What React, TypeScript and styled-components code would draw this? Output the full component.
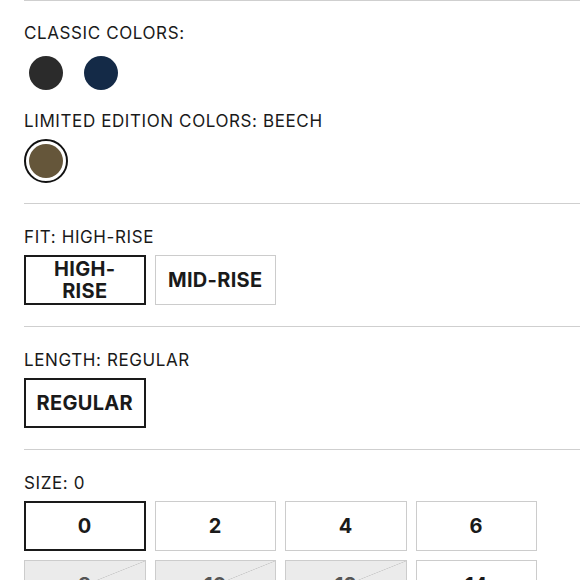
import React, { useState } from "react";
import styled, { createGlobalStyle, css } from "styled-components";

const GlobalStyle = createGlobalStyle`
    html, body {
        margin: 0;
        padding: 0;
        background: #fff;
    }
    body {
        font-family: Inter, "Helvetica Neue", Arial, sans-serif;
        color: #1a1a1a;
        overflow: hidden;
    }
`;

const classicColors = [
    { name: "BLACK", color: "#2b2b2b" },
    { name: "NAVY", color: "#142a47" },
];

const limitedColors = [{ name: "BEECH", color: "#65563a" }];

const fits = ["HIGH-RISE", "MID-RISE"];
const lengths = ["REGULAR"];
const sizes = [
    { label: "0", soldOut: false },
    { label: "2", soldOut: false },
    { label: "4", soldOut: false },
    { label: "6", soldOut: false },
    { label: "8", soldOut: true },
    { label: "10", soldOut: true },
    { label: "12", soldOut: true },
    { label: "14", soldOut: false },
];

/**
 * 商品选项面板
 */
const App = () => {
    const [color, setColor] = useState("BEECH");
    const [fit, setFit] = useState("HIGH-RISE");
    const [length, setLength] = useState("REGULAR");
    const [size, setSize] = useState("0");

    return (
        <Page>
            <GlobalStyle />
            <Section $first>
                <Label>CLASSIC COLORS:</Label>
                <SwatchRow>
                    {classicColors.map((c) => (
                        <Swatch key={c.name} $active={color === c.name} onClick={() => setColor(c.name)}>
                            <Dot $color={c.color} />
                        </Swatch>
                    ))}
                </SwatchRow>
                <Label $spaced>LIMITED EDITION COLORS: {color}</Label>
                <SwatchRow>
                    {limitedColors.map((c) => (
                        <Swatch key={c.name} $active={color === c.name} onClick={() => setColor(c.name)}>
                            <Dot $color={c.color} />
                        </Swatch>
                    ))}
                </SwatchRow>
            </Section>

            <Section>
                <Label>FIT: {fit}</Label>
                <OptionGrid>
                    {fits.map((f) => (
                        <Option key={f} $active={fit === f} onClick={() => setFit(f)}>
                            {f}
                        </Option>
                    ))}
                </OptionGrid>
            </Section>

            <Section>
                <Label>LENGTH: {length}</Label>
                <OptionGrid>
                    {lengths.map((l) => (
                        <Option key={l} $active={length === l} onClick={() => setLength(l)}>
                            {l}
                        </Option>
                    ))}
                </OptionGrid>
            </Section>

            <Section>
                <Label>SIZE: {size}</Label>
                <OptionGrid>
                    {sizes.map((s) => (
                        <Option
                            key={s.label}
                            $active={size === s.label}
                            $soldOut={s.soldOut}
                            onClick={() => !s.soldOut && setSize(s.label)}
                        >
                            {s.label}
                        </Option>
                    ))}
                </OptionGrid>
            </Section>
        </Page>
    );
};

const Page = styled.div`
    padding-left: 24px;
    width: 600px;
`;

const Section = styled.section<{ $first?: boolean }>`
    border-top: 1px solid #cfcfcf;
    padding: ${(p) => (p.$first ? "22px 0 20px" : "23px 0 21px")};
`;

const Label = styled.div<{ $spaced?: boolean }>`
    font-size: 17px;
    line-height: 20px;
    letter-spacing: 0.6px;
    font-weight: 400;
    color: #1a1a1a;
    margin-top: ${(p) => (p.$spaced ? "16px" : "0")};
    margin-bottom: 8px;
`;

const SwatchRow = styled.div`
    display: flex;
    gap: 11px;
`;

const Swatch = styled.div<{ $active?: boolean }>`
    box-sizing: border-box;
    width: 44px;
    height: 44px;
    border-radius: 50%;
    padding: 3px;
    border: 2px solid ${(p) => (p.$active ? "#111" : "transparent")};
    cursor: pointer;
`;

const Dot = styled.div<{ $color: string }>`
    width: 100%;
    height: 100%;
    border-radius: 50%;
    background: ${(p) => p.$color};
`;

const OptionGrid = styled.div`
    display: grid;
    grid-template-columns: repeat(4, 121.5px);
    gap: 9px;
`;

const Option = styled.button<{ $active?: boolean; $soldOut?: boolean }>`
    position: relative;
    box-sizing: border-box;
    height: 50px;
    padding: 0 10px;
    display: flex;
    align-items: center;
    justify-content: center;
    text-align: center;
    font-family: Inter, "Helvetica Neue", Arial, sans-serif;
    font-size: 20px;
    line-height: 22px;
    font-weight: 700;
    letter-spacing: 0.3px;
    color: #1a1a1a;
    background: #fff;
    border: 1px solid #cccccc;
    cursor: pointer;
    overflow: hidden;

    ${(p) =>
        p.$active &&
        css`
            border: 2px solid #1a1a1a;
        `}

    ${(p) =>
        p.$soldOut &&
        css`
            background: #ebebeb;
            color: #555;
            cursor: default;
            background-image: linear-gradient(
                to bottom right,
                transparent calc(50% - 0.6px),
                #c8c8c8 50%,
                transparent calc(50% + 0.6px)
            );
        `}
`;

export default App;
